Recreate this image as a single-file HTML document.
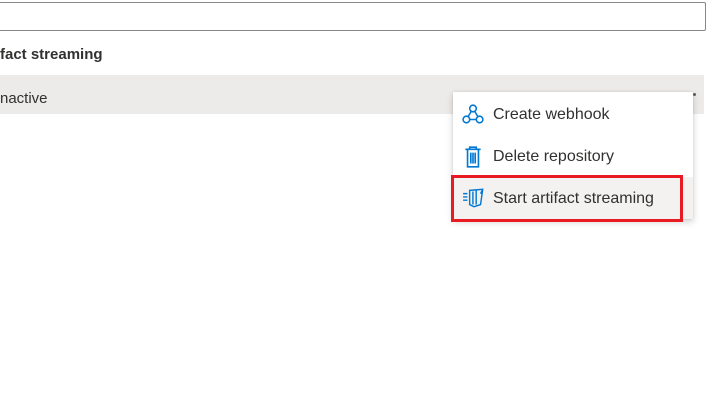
<!DOCTYPE html>
<html><head><style>
body{margin:0;width:718px;height:406px;background:#fff;position:relative;overflow:hidden;font-family:"Segoe UI","Liberation Sans",sans-serif;color:#323130}
.inp{position:absolute;left:-5px;top:2px;width:709px;height:27px;border:1px solid #8a8886;border-radius:2px}
.h{position:absolute;left:0;top:46px;font-size:15px;font-weight:bold;}
.row{position:absolute;left:0;top:75px;width:704px;height:39px;background:#edebe9}
.row span{position:absolute;left:0;top:15px;font-size:15px}
.dot{position:absolute;left:693px;top:93px;width:3px;height:3px;background:#605e5c;border-radius:50%}
.menu{position:absolute;left:453px;top:92px;width:240px;height:127px;background:#fff;box-shadow:0 3px 7px rgba(0,0,0,.18),0 0 2px rgba(0,0,0,.12)}
.it{position:absolute;left:0;width:240px;height:42px;font-size:16px}
.it span{position:absolute;left:40px;top:13px}
.it svg{position:absolute;left:9px;top:10px}
.red{position:absolute;left:451px;top:175px;width:226px;height:41px;border:3.5px solid #e81b23}
</style></head><body>
<div class="inp"></div>
<div class="h">fact streaming</div>
<div class="row"><span>nactive</span></div>
<div class="dot"></div>
<div class="menu">
<div class="it" style="top:1px"><svg width="22" height="22" viewBox="0 0 20 20" fill="none" stroke="#0078d4" stroke-width="1.4"><circle cx="10" cy="5" r="3"/><circle cx="4" cy="15" r="3"/><circle cx="16" cy="15" r="3"/><path d="M8.5 7.5L5.5 12.5M7 15h6M11.5 7.5l3 5"/></svg><span>Create webhook</span></div>
<div class="it" style="top:43px"><svg width="22" height="24" viewBox="0 0 20 22" fill="none" stroke="#0078d4" stroke-width="1.5"><path d="M3 4h14M7 4V2h6v2M5 4v16h10V4M8 7v10M10 7v10M12 7v10"/></svg><span>Delete repository</span></div>
<div class="it" style="top:85px;background:#f3f2f1"><svg width="24" height="22" viewBox="0 0 22 20" fill="none" stroke="#0078d4" stroke-width="1.3"><path d="M1 6h4M1 9h4M1 12h4M7 3l12-1-2 14-6 2-4-2zM10 4v12M13 3v13M19 2l-2 4"/></svg><span>Start artifact streaming</span></div>
</div>
<div class="red"></div>
</body></html>
